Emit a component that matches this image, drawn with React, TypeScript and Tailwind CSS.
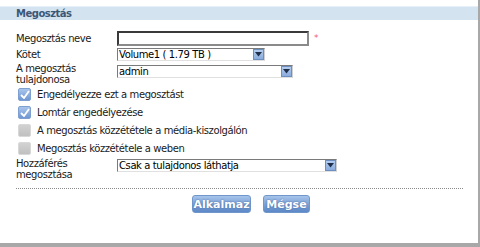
import React from "react";

const font = { fontFamily: '"DejaVu Sans", Verdana, sans-serif' };

function Select({ value, width }: { value: string; width: string }) {
  return (
    <div className={`flex h-[13px] ${width} border-t border-l border-[#7a7a7a] border-b border-r border-b-[#e0e0e0] border-r-[#d0d0d0] bg-white`}>
      <span className="flex-1 pl-[1px] text-[10px] leading-[12px] tracking-[-0.4px] text-black truncate">{value}</span>
      <span className="flex w-[11px] items-center justify-center border border-[#6d8fc0] bg-gradient-to-b from-[#b4cdf0] to-[#8aabdc]">
        <svg width="7" height="5" viewBox="0 0 7 5">
          <path d="M0 0h7L3.5 4.5z" fill="#1f2f4a" />
        </svg>
      </span>
    </div>
  );
}

function Check({ checked, label }: { checked: boolean; label: string }) {
  return (
    <div className="flex h-[18px] items-center gap-[6px] pl-[2px]">
      {checked ? (
        <span className="flex h-[13px] w-[13px] items-center justify-center rounded-[2px] border border-[#7e9fcf] bg-gradient-to-b from-[#a9c5ec] to-[#6f97d2]">
          <svg width="10" height="9" viewBox="0 0 10 9">
            <path d="M1 5l3 3 5-7" stroke="#fff" strokeWidth="1.8" fill="none" />
          </svg>
        </span>
      ) : (
        <span className="h-[13px] w-[13px] rounded-[2px] border border-[#d8d8d8] bg-gradient-to-b from-[#d2d2d2] to-[#c0c0c0]" />
      )}
      <span className="text-[10px] tracking-[-0.4px] text-[#1a1a1a]">{label}</span>
    </div>
  );
}

export default function App() {
  return (
    <div style={font} className="flex h-[247px] w-[480px] flex-col bg-white border-r-[2px] border-[#a8a8a8]">
      {/* Header */}
      <div className="mt-[6px] h-[14px] border-t border-[#e6eff7] bg-[#d3e3ef] pl-[16px] text-[10px] font-bold leading-[13px] tracking-[-0.5px] text-[#3b5878]">
        Megosztás
      </div>

      <div className="flex flex-1 flex-col pl-[16px] pt-[11px] tracking-[-0.4px]">
        <div className="flex h-[15px] items-center">
          <span className="w-[101px] text-[10px] text-[#1a1a1a]">Megosztás neve</span>
          <div className="h-[15px] w-[192px] border-2 border-[#3a3a3a] border-b-[#8a8a8a] border-r-[#8a8a8a] bg-white" />
          <span className="ml-[5px] text-[9px] leading-none text-[#f06070]">*</span>
        </div>

        <div className="mt-[2px] flex h-[13px] items-center">
          <span className="w-[101px] text-[10px] text-[#1a1a1a]">Kötet</span>
          <Select value="Volume1 ( 1.79 TB )" width="w-[148px]" />
        </div>

        <div className="mt-[2px] flex items-start">
          <span className="w-[101px] text-[10px] leading-[11px] text-[#1a1a1a]">
            A megosztás
            <br />
            tulajdonosa
          </span>
          <div className="mt-[2px]">
            <Select value="admin" width="w-[176px]" />
          </div>
        </div>

        <div className="flex flex-col">
          <Check checked label="Engedélyezze ezt a megosztást" />
          <Check checked label="Lomtár engedélyezése" />
          <Check checked={false} label="A megosztás közzététele a média-kiszolgálón" />
          <Check checked={false} label="Megosztás közzététele a weben" />
        </div>

        <div className="mt-[1px] flex items-start">
          <span className="w-[101px] text-[10px] leading-[11px] text-[#1a1a1a]">
            Hozzáférés
            <br />
            megosztása
          </span>
          <div className="mt-[1px]">
            <Select value="Csak a tulajdonos láthatja" width="w-[220px]" />
          </div>
        </div>

        <div className="mt-[8px] mr-[15px] border-t border-dotted border-[#8a8a8a]" />

        <div className="mt-[6px] flex gap-[12px] pl-[176px] tracking-normal">
          <button className="h-[18px] w-[59px] rounded-[3px] border border-[#6f97cc] bg-gradient-to-b from-[#a7c4ea] via-[#7ea4d8] to-[#5d88c6] text-[11px] font-bold leading-none text-white [text-shadow:0_0_2px_#3a5f99]">
            Alkalmaz
          </button>
          <button className="h-[18px] w-[47px] rounded-[3px] border border-[#6f97cc] bg-gradient-to-b from-[#a7c4ea] via-[#7ea4d8] to-[#5d88c6] text-[11px] font-bold leading-none text-white [text-shadow:0_0_2px_#3a5f99]">
            Mégse
          </button>
        </div>
      </div>

      <div className="h-[4px] bg-[#a8a8a8]" />
    </div>
  );
}
